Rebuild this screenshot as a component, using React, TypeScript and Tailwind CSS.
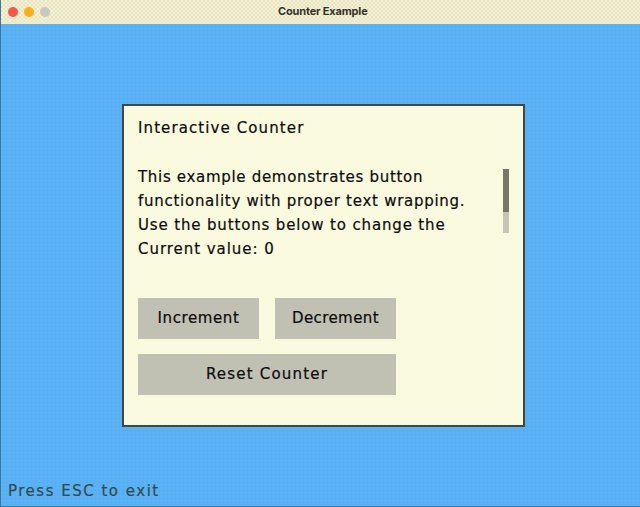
import React from 'react';

type LineProps = { text: string; className?: string };

function Line({ text, className = '' }: LineProps) {
  return <div className={`h-6 whitespace-pre leading-6 ${className}`}>{text}</div>;
}

function TitleBar() {
  return (
    <header className="flex h-6 shrink-0 items-center border-b border-[#f8edb4] bg-[#f6f2c0] bg-[repeating-conic-gradient(#e5e3d0_0_25%,#f7f4c8_0_50%)] bg-[length:4px_4px] pl-[7px]">
      <div className="flex w-[100px] gap-1.5">
        <span className="size-2.5 rounded-full bg-[#ff5448]" />
        <span className="size-2.5 rounded-full bg-[#ffad19]" />
        <span className="size-2.5 rounded-full bg-[#c8c8bd]" />
      </div>
      <h1 className="ml-[170px] whitespace-nowrap font-['Inter',sans-serif] text-[11px] font-bold tracking-[-0.17px] text-[#333329] [-webkit-text-stroke:0]">
        Counter Example
      </h1>
    </header>
  );
}

const button = 'h-[41px] bg-[#c0c0b3]';

export default function App() {
  return (
    <main className="flex h-[507px] w-[640px] flex-col overflow-hidden border-b border-l border-[#3b789c] bg-[#5ab1f8] bg-[radial-gradient(circle_at_2.5px_2.5px,#48b5c0_0.6px,transparent_0.7px)] bg-[length:4px_4px] font-['DejaVu_Sans',sans-serif] text-[15px] text-[#0c0c0c] [-webkit-text-stroke:0.2px_currentColor]">
      <TitleBar />
      <section className="ml-[121px] mt-[80px] h-[323px] w-[403px] shrink-0 border-2 border-[#45473c] bg-[#f9f9df] bg-[repeating-conic-gradient(#f7f7ea_0_25%,#fcfcd2_0_50%)] bg-[length:4px_4px] pl-3.5 pt-[10px]">
        <Line text="Interactive Counter" className="tracking-[1.1px]" />
        <div className="mt-[25px] flex justify-between pr-[14px]">
          <div>
            <Line text="This example demonstrates button" className="tracking-[0.69px]" />
            <Line text="functionality with proper text wrapping." className="tracking-[0.73px]" />
            <Line text="Use the buttons below to change the" className="tracking-[0.85px]" />
            <Line text="Current value: 0" className="tracking-[0.95px]" />
          </div>
          <div className="mt-1 h-[64px] w-1.5 bg-[#c5c5b5]">
            <div className="h-[43px] bg-[#777768]" />
          </div>
        </div>
        <div className="mt-[37px] grid w-[258px] grid-cols-2 gap-x-4 gap-y-[15px]">
          <button className={`${button} tracking-[0.6px]`}>Increment</button>
          <button className={`${button} tracking-[0.4px]`}>Decrement</button>
          <button className={`${button} col-span-2 tracking-[1.2px]`}>Reset Counter</button>
        </div>
      </section>
      <footer className="ml-[7px] mt-[52px] leading-6 tracking-[1.5px] text-[#344c48]">Press ESC to exit</footer>
    </main>
  );
}
